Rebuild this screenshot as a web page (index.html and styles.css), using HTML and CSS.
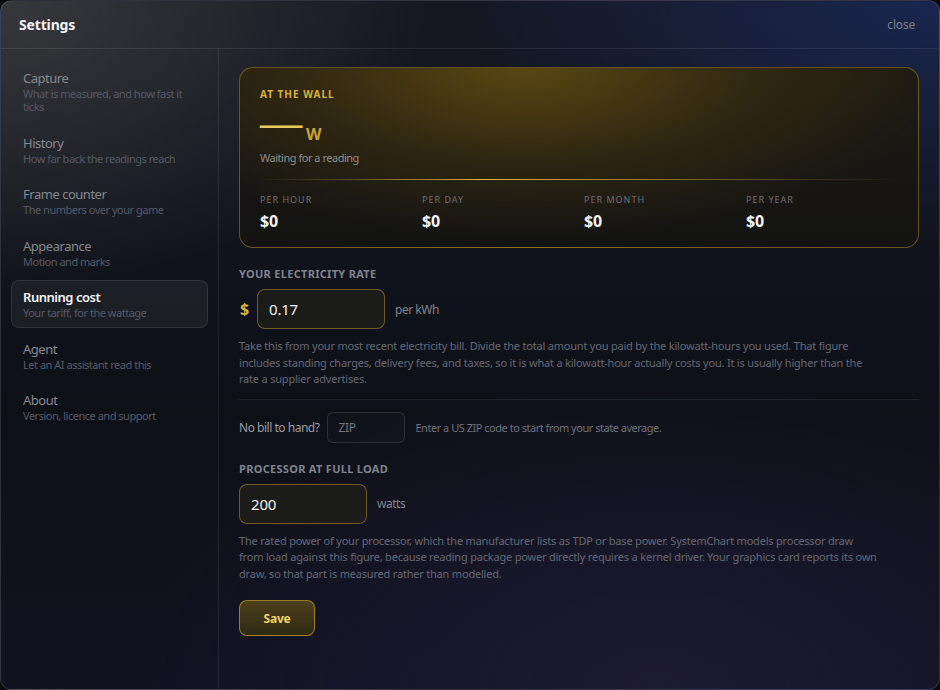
FILE: index.html
```html
<!DOCTYPE html>
<html lang="en">
<head>
<meta charset="utf-8">
<title>Settings</title>
<link rel="stylesheet" href="styles.css">
</head>
<body>
<div class="window">
  <header class="header">
    <h1 class="title">Settings</h1>
    <span class="close">close</span>
  </header>
  <div class="body">
    <nav class="sidebar">
      <div class="nav-item"><div class="nav-title">Capture</div><div class="nav-sub">What is measured, and how fast it ticks</div></div>
      <div class="nav-item"><div class="nav-title">History</div><div class="nav-sub">How far back the readings reach</div></div>
      <div class="nav-item"><div class="nav-title">Frame counter</div><div class="nav-sub">The numbers over your game</div></div>
      <div class="nav-item"><div class="nav-title">Appearance</div><div class="nav-sub">Motion and marks</div></div>
      <div class="nav-item active"><div class="nav-title">Running cost</div><div class="nav-sub">Your tariff, for the wattage</div></div>
      <div class="nav-item"><div class="nav-title">Agent</div><div class="nav-sub">Let an AI assistant read this</div></div>
      <div class="nav-item"><div class="nav-title">About</div><div class="nav-sub">Version, licence and support</div></div>
    </nav>
    <main class="main">
      <section class="card">
        <div class="card-label">AT THE WALL</div>
        <div class="reading"><span class="reading-value">—</span><span class="reading-unit">W</span></div>
        <div class="reading-note">Waiting for a reading</div>
        <div class="card-rule"></div>
        <div class="stats">
          <div class="stat"><div class="stat-label">PER HOUR</div><div class="stat-value">$0</div></div>
          <div class="stat"><div class="stat-label">PER DAY</div><div class="stat-value">$0</div></div>
          <div class="stat"><div class="stat-label">PER MONTH</div><div class="stat-value">$0</div></div>
          <div class="stat"><div class="stat-label">PER YEAR</div><div class="stat-value">$0</div></div>
        </div>
      </section>

      <div class="section-label">YOUR ELECTRICITY RATE</div>
      <div class="field-row">
        <span class="currency">$</span>
        <input class="field" type="text" value="0.17">
        <span class="unit">per kWh</span>
      </div>
      <p class="help">Take this from your most recent electricity bill. Divide the total amount you paid by the kilowatt-hours you used. That figure includes standing charges, delivery fees, and taxes, so it is what a kilowatt-hour actually costs you. It is usually higher than the rate a supplier advertises.</p>
      <div class="divider"></div>
      <div class="zip-row">
        <span class="zip-label">No bill to hand?</span>
        <input class="zip" type="text" placeholder="ZIP">
        <span class="zip-help">Enter a US ZIP code to start from your state average.</span>
      </div>

      <div class="section-label">PROCESSOR AT FULL LOAD</div>
      <div class="field-row">
        <input class="field" type="text" value="200">
        <span class="unit">watts</span>
      </div>
      <p class="help">The rated power of your processor, which the manufacturer lists as TDP or base power. SystemChart models processor draw from load against this figure, because reading package power directly requires a kernel driver. Your graphics card reports its own draw, so that part is measured rather than modelled.</p>
      <button class="save" type="button">Save</button>
    </main>
  </div>
</div>
</body>
</html>
```
FILE: styles.css
```css
* { box-sizing: border-box; }
html, body { margin: 0; height: 100%; }
body {
  background: #0a0b0f;
  font-family: "Noto Sans", "Open Sans", sans-serif;
  letter-spacing: -0.03em;
  color: #d0d2d8;
}
.window {
  height: 690px;
  width: 940px;
  border: 1px solid rgba(255,255,255,0.13);
  border-radius: 12px;
  overflow: hidden;
  display: flex;
  flex-direction: column;
  background:
    radial-gradient(ellipse 45% 42% at 0% 0%, rgba(62,62,64,0.85), rgba(62,62,64,0) 100%),
    radial-gradient(ellipse 50% 35% at 100% 0%, rgba(26,40,86,0.85), rgba(26,40,86,0) 100%),
    radial-gradient(ellipse 55% 45% at 70% 100%, rgba(34,30,58,0.7), rgba(34,30,58,0) 100%),
    linear-gradient(180deg, #151823 0%, #0e1018 60%, #111220 100%);
}
.header {
  height: 48px;
  flex: none;
  display: flex;
  align-items: center;
  justify-content: space-between;
  padding: 0 24px 0 18px;
  border-bottom: 1px solid rgba(255,255,255,0.09);
}
.title {
  margin: 0;
  font-size: 14px;
  font-weight: 700;
  letter-spacing: -0.15px;
  color: #f2f2f4;
}
.close {
  font-size: 12px;
  letter-spacing: -0.2px;
  color: #7c7f88;
}
.body {
  flex: 1;
  display: flex;
  min-height: 0;
}
.sidebar {
  width: 218px;
  flex: none;
  border-right: 1px solid rgba(255,255,255,0.08);
  padding: 11.5px 10px 0 10px;
  display: flex;
  flex-direction: column;
  gap: 4px;
}
.nav-item {
  padding: 8px 11px 7px 11px;
  border: 1px solid transparent;
  border-radius: 8px;
}
.nav-item.active {
  background: rgba(255,255,255,0.05);
  border-color: rgba(255,255,255,0.1);
}
.nav-title {
  font-size: 13px;
  line-height: 17px;
  color: #85878f;
}
.nav-item.active .nav-title {
  color: #f4f4f6;
  font-weight: 600;
}
.nav-sub {
  font-size: 11px;
  line-height: 13.5px;
  color: #555966;
}
.main {
  flex: 1;
  padding: 18px 20px 0 20px;
  min-width: 0;
}
.card {
  border: 1px solid rgba(200,160,40,0.45);
  border-radius: 14px;
  padding: 20px 20px 16px 20px;
  background:
    radial-gradient(ellipse 62% 95% at 42% 0%, rgba(112,88,18,0.72), rgba(80,62,16,0.38) 55%, rgba(40,32,12,0) 100%),
    linear-gradient(180deg, #1d1a12 0%, #131313 100%);
}
.card-label {
  font-size: 10px;
  line-height: 13px;
  font-weight: 700;
  letter-spacing: 1px;
  color: #d8b43e;
}
.reading {
  display: flex;
  align-items: flex-end;
  height: 42px;
  margin-top: -1px;
}
.reading-value {
  display: inline-block;
  font-size: 24px;
  line-height: 24px;
  font-weight: 700;
  letter-spacing: 0;
  color: #e9c95a;
  margin: 0 24px 6px -2px;
  transform: scaleX(1.93);
  transform-origin: 0 50%;
}
.reading-unit {
  font-size: 16px;
  line-height: 16px;
  font-weight: 700;
  letter-spacing: 0;
  color: #c9a43a;
}
.reading-note {
  font-size: 11px;
  line-height: 16px;
  color: #8f8e8a;
  margin-top: 8px;
}
.card-rule {
  height: 1px;
  margin: 13px 0 14px 0;
  background: linear-gradient(90deg, rgba(212,175,55,0) 0%, rgba(212,175,55,0.35) 15%, rgba(226,188,70,0.95) 35%, rgba(212,175,55,0.45) 70%, rgba(212,175,55,0) 100%);
}
.stats {
  display: grid;
  grid-template-columns: repeat(4, 1fr);
  gap: 10px;
}
.stat-label {
  font-size: 9px;
  line-height: 12px;
  letter-spacing: 1px;
  color: #6e6e72;
}
.stat-value {
  font-size: 16px;
  line-height: 20px;
  margin-top: 5px;
  font-weight: 700;
  letter-spacing: -0.2px;
  color: #f4f4f4;
}
.section-label {
  font-size: 11px;
  line-height: 14px;
  font-weight: 700;
  letter-spacing: 0.3px;
  color: #80838d;
  margin-top: 19px;
}
.field-row {
  display: flex;
  align-items: center;
  margin-top: 8px;
}
.currency {
  font-size: 16px;
  font-weight: 700;
  color: #d6b13e;
  width: 18px;
  padding-left: 1px;
}
.field {
  width: 128px;
  height: 40px;
  border: 1px solid rgba(196,156,40,0.5);
  border-radius: 8px;
  background: rgba(28,28,26,0.92);
  color: #f2f2f2;
  font-family: "Noto Sans", "Open Sans", sans-serif;
  font-size: 15px;
  letter-spacing: -0.2px;
  padding: 0 11px;
  outline: none;
}
.unit {
  font-size: 12px;
  color: #80828a;
  margin-left: 10px;
}
.help {
  margin: 9px 0 0 0;
  max-width: 640px;
  font-size: 11px;
  line-height: 16.5px;
  letter-spacing: -0.2px;
  color: #646873;
}
.divider {
  height: 1px;
  background: rgba(255,255,255,0.08);
  margin-top: 11px;
}
.zip-row {
  display: flex;
  align-items: center;
  margin-top: 12px;
}
.zip-label {
  font-size: 12px;
  color: #9b9da5;
}
.zip {
  width: 78px;
  height: 31px;
  margin-left: 8px;
  border: 1px solid rgba(255,255,255,0.12);
  border-radius: 6px;
  background: rgba(255,255,255,0.015);
  font-family: "Noto Sans", "Open Sans", sans-serif;
  font-size: 12px;
  letter-spacing: -0.3px;
  color: #d0d0d0;
  padding: 0 10px;
  outline: none;
}
.zip::placeholder { color: #737680; }
.zip-help {
  font-size: 11px;
  color: #6e717b;
  margin-left: 10px;
}
.save {
  display: block;
  margin-top: 18px;
  width: 76px;
  height: 36px;
  border: 1px solid rgba(200,160,40,0.7);
  border-radius: 8px;
  background: linear-gradient(180deg, #4c3f1a 0%, #2f2914 100%);
  color: #f2d26a;
  font-family: "Noto Sans", "Open Sans", sans-serif;
  font-size: 12px;
  font-weight: 700;
  letter-spacing: -0.2px;
  cursor: pointer;
}
```
